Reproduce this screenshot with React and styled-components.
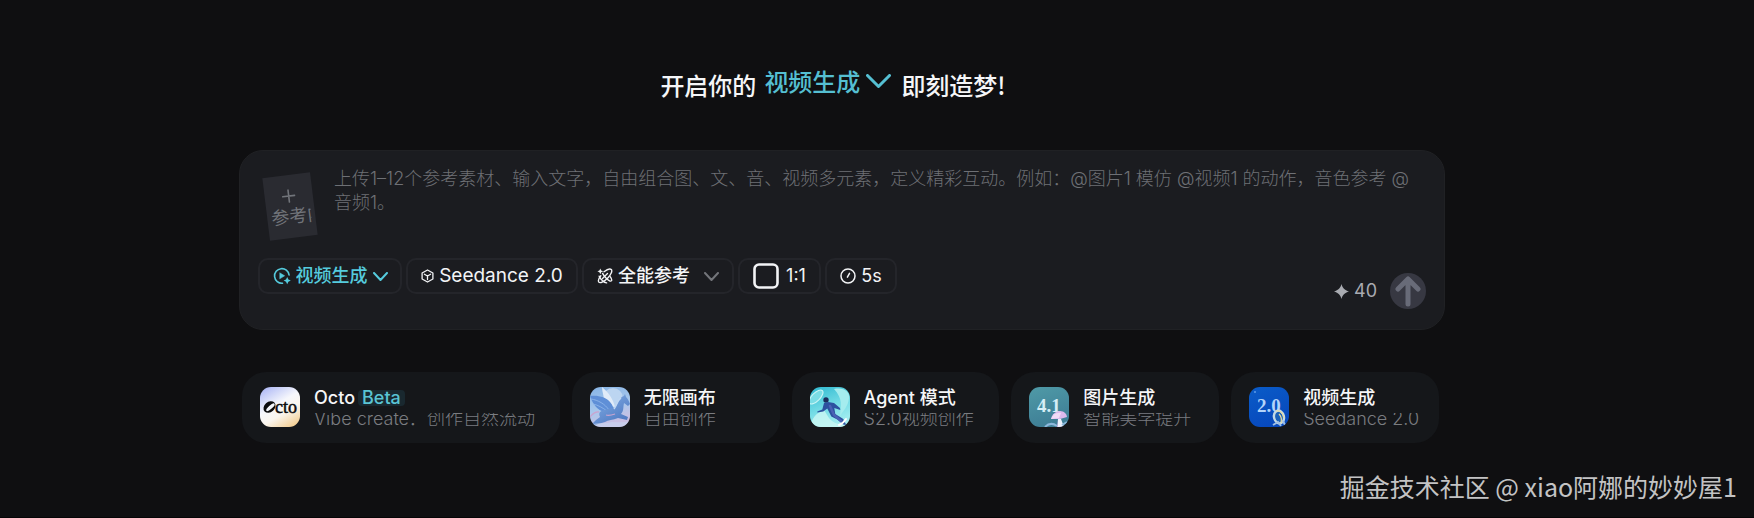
import React from "react";
import styled, { createGlobalStyle } from "styled-components";

const GlobalStyle = createGlobalStyle`
  *, *::before, *::after { box-sizing: border-box; }
  body {
    margin: 0;
    background: #0f0f11;
    color: #f5f6f8;
    font-family: Inter, "Noto Sans CJK SC", sans-serif;
  }
  button, select, textarea { font: inherit; color: inherit; margin: 0; padding: 0; border: 0; background: none; }
  h1, h2, p { margin: 0; font-weight: inherit; }
`;

const Page = styled.div`
  min-height: 100vh;
  display: flex;
  flex-direction: column;
`;

const Main = styled.main`
  padding: 65px 309px 0 239px;
`;

const Hero = styled.h1`
  display: flex;
  align-items: center;
  justify-content: center;
  gap: 8px;
  height: 40px;
  padding-right: 18px;
  font-size: 24px;
  line-height: 36px;
  font-weight: 500;
  font-family: "Noto Sans CJK SC", sans-serif;
  white-space: nowrap;
`;

const HeroPicker = styled.span`
  display: flex;
  align-items: center;
  gap: 6px;
  margin-right: 2px;
  padding-bottom: 8px;
  color: #55bfd2;
`;

const Select = styled.select`
  appearance: none;
  field-sizing: content;
  outline: none;
  cursor: pointer;
`;

const Composer = styled.form`
  display: flex;
  flex-direction: column;
  min-height: 180px;
  margin-top: 45px;
  padding: 16px 18px 18px;
  border-radius: 24px;
  border: 1px solid #202124;
  background: #1b1c20;
`;

const PromptRow = styled.div`
  display: flex;
  align-items: flex-start;
  gap: 12px;
  height: 91px;
`;

const UploadButton = styled.button`
  flex: none;
  display: flex;
  flex-direction: column;
  align-items: stretch;
  width: 48px;
  height: 63px;
  margin: 8px 8px 0;
  padding: 14px 4px 0;
  background: #2a2b31;
  color: #71747a;
  transform: rotate(-7deg);
  cursor: pointer;
  svg { align-self: center; }
`;

const UploadText = styled.span`
  overflow: hidden;
  margin-top: 2px;
  font-size: 18px;
  line-height: 24px;
  text-align: left;
  white-space: nowrap;
`;

const Prompt = styled.textarea`
  flex: 1;
  min-width: 0;
  height: 60px;
  resize: none;
  outline: none;
  font-size: 18px;
  line-height: 24px;
  font-weight: 300;
  &::placeholder { color: #6e7075; opacity: 1; }
`;

const Toolbar = styled.div`
  display: flex;
  align-items: flex-start;
  gap: 4px;
`;

const Chip = styled.div`
  display: flex;
  align-items: center;
  justify-content: center;
  gap: ${(p) => p.$gap || 5}px;
  height: 36px;
  min-width: ${(p) => p.$min}px;
  padding: 0 12px;
  border: 2px solid #24252a;
  border-radius: 10px;
  color: ${(p) => (p.$accent ? "#55cbdd" : "#f3f4f6")};
  font-size: ${(p) => p.$size || 18}px;
  line-height: 24px;
  font-weight: ${(p) => p.$weight || 500};
  white-space: nowrap;
  cursor: pointer;
  svg { flex: none; }
  select + svg { margin-left: ${(p) => p.$spread || 0}px; }
`;

const Submit = styled.div`
  display: flex;
  align-items: center;
  gap: 13px;
  margin: 15px 0 0 auto;
`;

const Credits = styled.span`
  display: flex;
  align-items: center;
  gap: 5px;
  color: #a9abb1;
  font-size: 18px;
  line-height: 24px;
`;

const SendButton = styled.button`
  display: grid;
  place-items: center;
  width: 36px;
  height: 36px;
  border-radius: 50%;
  background: #373842;
  color: #686b78;
  cursor: pointer;
`;

const Cards = styled.nav`
  display: grid;
  grid-template-columns: 318fr 208fr 208fr 208fr 208fr;
  gap: 12px;
  margin: 42px 6px 0 3px;
`;

const Card = styled.a`
  display: flex;
  align-items: flex-start;
  gap: 14px;
  min-width: 0;
  height: 71px;
  padding: 15px 16px 0 18px;
  border-radius: 24px;
  background: #15171a;
  color: inherit;
  text-decoration: none;
`;

const Thumb = styled.svg`
  flex: none;
  width: 40px;
  height: 40px;
  border-radius: 11px;
`;

const CardText = styled.span`
  display: flex;
  flex-direction: column;
  min-width: 0;
  white-space: nowrap;
`;

const CardTitle = styled.span`
  display: flex;
  align-items: center;
  gap: 3px;
  height: 21px;
  overflow: hidden;
  font-size: 18px;
  line-height: 24px;
  font-weight: 500;
`;

const Beta = styled.span`
  padding: 0 4px;
  border-radius: 4px;
  background: #19282f;
  color: #5ac4d4;
  line-height: 16px;
`;

const CardNote = styled.span`
  height: 13px;
  margin-top: 5px;
  overflow: hidden;
  color: #7a7c80;
  font-size: 18px;
  line-height: 12px;
  font-weight: 300;
`;

const Credit = styled.footer`
  margin: auto 0 0;
  padding: 0 17px 13px 0;
  border-bottom: 1px solid #050506;
  color: #c3c3c4;
  font-family: "Noto Sans CJK SC", sans-serif;
  font-size: 25px;
  line-height: 36px;
  text-align: right;
`;

const Chevron = ({ w, h, stroke = "currentColor", sw = 2 }) => (
  <svg width={w} height={h} viewBox={`0 0 ${w} ${h}`} fill="none" stroke={stroke} strokeWidth={sw} strokeLinecap="round" strokeLinejoin="round" aria-hidden="true">
    <path d={`M${sw / 2} ${sw / 2}L${w / 2} ${h - sw / 2}L${w - sw / 2} ${sw / 2}`} />
  </svg>
);

const VideoIcon = () => (
  <svg width="18" height="18" viewBox="0 0 18 18" fill="none" stroke="currentColor" strokeWidth="1.6" strokeLinecap="round" aria-hidden="true">
    <path d="M9.5 16.2A7.3 7.3 0 1 1 16.1 8" />
    <path d="M7 6l4.6 2.8L7 11.6z" fill="currentColor" strokeWidth="0.6" />
    <path d="M14.200 10l1.200 2.400 2.400 1.200-2.400 1.200-1.200 2.400-1.200-2.400-2.400-1.200 2.400-1.200z" fill="currentColor" stroke="none" />
  </svg>
);

const CubeIcon = () => (
  <svg width="13" height="14" viewBox="0 0 13 14" fill="none" stroke="currentColor" strokeWidth="1.3" strokeLinejoin="round" aria-hidden="true">
    <path d="M6.5 1l5.4 3v6l-5.4 3-5.4-3V4z" />
    <path d="M3.4 5.2l3.1 1.8 3.1-1.8M6.5 7v3.6" strokeLinecap="round" />
  </svg>
);

const ReferenceIcon = () => (
  <svg width="16" height="16" viewBox="0 0 16 16" fill="none" stroke="currentColor" strokeWidth="1.4" strokeLinecap="round" strokeLinejoin="round" aria-hidden="true">
    <path d="M7 3.800C10 1.400 13.200.600 14.300 1.600c1.300 1.300-.3 5.200-3.500 8.500S3.300 15.300 2 14.300c-1-1-.3-3.800 1.800-6.500" />
    <path d="M5.600 5.400c.8 1.600 2 3.200 3.400 4.500 2.300 2.300 4.700 3.500 5.400 2.900.6-.6.100-2.300-1.200-4.100" />
    <path d="M2.200 8.200c.5 1.400 1.700 3 3.200 4.400 1.500 1.300 3 2.100 4.200 2.300" />
    <path d="M5.500 10.500l5-5" />
    <path d="M3.300.4l.9 2 2 .9-2 .9-.9 2-.9-2-2-.9 2-.9z" fill="currentColor" stroke="none" />
  </svg>
);

const RatioIcon = () => (
  <svg width="26" height="26" viewBox="0 0 26 26" fill="none" stroke="currentColor" strokeWidth="2.6" aria-hidden="true">
    <rect x="1.500" y="1.500" width="23" height="23" rx="4.500" />
  </svg>
);

const TimeIcon = () => (
  <svg width="16" height="16" viewBox="0 0 16 16" fill="none" stroke="currentColor" strokeWidth="1.500" strokeLinecap="round" aria-hidden="true">
    <circle cx="8" cy="8" r="7" />
    <path d="M7.400 9.200L9.500 5.400" />
  </svg>
);

const OctoThumb = () => (
  <Thumb viewBox="0 0 40 40" aria-hidden="true">
    <defs>
      <linearGradient id="octo" x1="0.200" y1="0" x2="0.800" y2="1">
        <stop offset="0" stopColor="#b3bdf6" />
        <stop offset="0.420" stopColor="#f6f7fc" />
        <stop offset="0.650" stopColor="#fbf6ef" />
        <stop offset="1" stopColor="#f3cf94" />
      </linearGradient>
    </defs>
    <rect width="40" height="40" fill="url(#octo)" />
    <g transform="rotate(-42 9.500 20)">
      <ellipse cx="9.500" cy="20" rx="6.600" ry="5.200" fill="#0b0b0d" />
      <ellipse cx="10" cy="20.800" rx="5.400" ry="1.800" fill="#f4f5fa" />
    </g>
    <text x="15" y="25.500" fontFamily="Liberation Serif, serif" fontSize="18" stroke="#0b0b0d" strokeWidth="0.500" fill="#0b0b0d">cto</text>
  </Thumb>
);

const PegasusThumb = () => (
  <Thumb viewBox="0 0 40 40" aria-hidden="true">
    <defs>
      <linearGradient id="sky" x1="0" y1="0" x2="0.300" y2="1">
        <stop offset="0" stopColor="#86b4e6" />
        <stop offset="0.600" stopColor="#a9c8ec" />
        <stop offset="1" stopColor="#cbbfe2" />
      </linearGradient>
      <linearGradient id="horse" x1="0" y1="0" x2="0.700" y2="1">
        <stop offset="0" stopColor="#86b2e8" />
        <stop offset="1" stopColor="#4d77c0" />
      </linearGradient>
    </defs>
    <rect width="40" height="40" fill="url(#sky)" />
    <circle cx="23" cy="11" r="10" fill="#bcd5f1" />
    <path d="M12 0c7 6 11 12 13 20l-9-3C14 10 12 5 12 0z" fill="#e0ebf8" />
    <path d="M0 9c8-1 16 1 20 6 3 3 4 7 4 11l-10-1C8 23 3 18 0 9z" fill="#5f8fd7" />
    <path d="M1 12c7 1 14 5 18 11M3 17c5 1 10 4 14 7" stroke="#8fb5ea" strokeWidth="0.900" fill="none" />
    <path d="M10 25c5-4 12-2 16-6 2-4 4-9 8-10l1-2 1 3c2 2 3 4 4 7l-2 2-4-3c-1 4 0 8-3 11l7 3-1 3-9-2c-5 2-10 2-13 4l-7 2-5 3-1-3 4-4 4-3c-1-2-1-4 0-5z" fill="url(#horse)" />
    <path d="M31 11c-4 3-4 7-7 11" stroke="#c1d8f3" strokeWidth="1.500" fill="none" />
    <path d="M9 25c-5-1-7 3-9 5M16 28c3 1 6 0 9-1" stroke="#c9a4cf" strokeWidth="1.300" fill="none" />
    <path d="M0 38c8-3 16-1 22-3 6 0 12 1 18-1v6H0z" fill="#c6d7f1" opacity="0.600" />
  </Thumb>
);

const AgentThumb = () => (
  <Thumb viewBox="0 0 40 40" aria-hidden="true">
    <defs>
      <linearGradient id="wave" x1="0.200" y1="0" x2="0.600" y2="1">
        <stop offset="0" stopColor="#35bcd2" />
        <stop offset="0.500" stopColor="#72dbe5" />
        <stop offset="1" stopColor="#a8eff1" />
      </linearGradient>
    </defs>
    <rect width="40" height="40" fill="url(#wave)" />
    <ellipse cx="6" cy="10" rx="9" ry="4" transform="rotate(-45 6 10)" fill="#7bdde5" stroke="#c9f5f5" strokeWidth="1.200" />
    <path d="M24 2c10-2 16 3 15 9-1 9-6 13-9 18 1-11 3-17-6-27z" fill="#a5ecee" />
    <path d="M0 40c2-9 6-14 14-17l5 8c4 5 10 7 21 7v2z" fill="#ccf7f4" opacity="0.800" />
    <circle cx="16" cy="13" r="2.700" fill="#1c2c5c" />
    <path d="M14 16l4-1 6 1 6 5 .3 2-6-2 1 6 8 5 3 6-3-.5-6-5-6-3-4-8-4 3-6 1v-1l5-2z" fill="#2c529f" />
    <path d="M20 19l4 9 7 6" stroke="#4a61b5" strokeWidth="2.500" fill="none" strokeLinecap="round" />
    <path d="M29 38c3-1 5-3 7-6" stroke="#fff" strokeWidth="2" strokeLinecap="round" fill="none" />
  </Thumb>
);

const ImageThumb = () => (
  <Thumb viewBox="0 0 40 40" aria-hidden="true">
    <defs>
      <linearGradient id="teal" x1="0" y1="0" x2="0.300" y2="1">
        <stop offset="0" stopColor="#4f9aa7" />
        <stop offset="1" stopColor="#3f7f96" />
      </linearGradient>
    </defs>
    <rect width="40" height="40" fill="url(#teal)" />
    <text x="8" y="25" fontFamily="Liberation Serif, serif" fontSize="19" fontWeight="700" fill="#d5eef6">4.1</text>
    <path d="M22 32c1-5 5-8 9-8 4 0 7 3 7 6l-7 2 4 8h-7l1-8z" fill="#dcb9ec" />
    <path d="M22 32c2-5 6-7 10-6l-2 5z" fill="#f1dcf6" />
    <path d="M29 32h3l3 8h-6z" fill="#edf2fc" />
    <path d="M16 40c4-4 8-4 12-1M33 38l5-3" stroke="#8db8dc" strokeWidth="2" fill="none" />
  </Thumb>
);

const VideoThumb = () => (
  <Thumb viewBox="0 0 40 40" aria-hidden="true">
    <defs>
      <linearGradient id="blue" x1="0" y1="0" x2="0.400" y2="1">
        <stop offset="0" stopColor="#0a5cc8" />
        <stop offset="1" stopColor="#0749bd" />
      </linearGradient>
    </defs>
    <rect width="40" height="40" fill="url(#blue)" />
    <circle cx="6" cy="5" r="1" fill="#5d9be8" />
    <text x="8" y="25" fontFamily="Liberation Serif, serif" fontSize="19" fontWeight="700" fill="#b3d4fa">2.0</text>
    <ellipse cx="30" cy="30" rx="5" ry="6.500" transform="rotate(-15 30 30)" fill="#1b62b9" stroke="#c3d9e4" strokeWidth="2.400" />
    <path d="M27 24c4-1 7 2 8 7M30 27c2 2 3 5 2 9" stroke="#e4d9a1" strokeWidth="1.200" fill="none" />
    <path d="M24 38l5-3 3 4M34 34l2 4" stroke="#9fbfe4" strokeWidth="2" fill="none" />
  </Thumb>
);

const cards = [
  { title: "Octo", tag: "Beta", note: "Vibe create．创作自然流动", Art: OctoThumb },
  { title: "无限画布", note: "自由创作", Art: PegasusThumb },
  { title: "Agent 模式", note: "S2.0视频创作", Art: AgentThumb },
  { title: "图片生成", note: "智能美学提升", Art: ImageThumb },
  { title: "视频生成", note: "Seedance 2.0", Art: VideoThumb },
];

export default function App() {
  return (
    <Page>
      <GlobalStyle />
      <Main>
        <Hero>
          <span>开启你的</span>
          <HeroPicker>
            <Select aria-label="创作类型"><option>视频生成</option></Select>
            <Chevron w={25} h={14} sw={3} />
          </HeroPicker>
          <span>即刻造梦!</span>
        </Hero>
        <Composer onSubmit={(e) => e.preventDefault()}>
          <PromptRow>
            <UploadButton type="button">
              <svg width="14" height="14" viewBox="0 0 14 14" stroke="currentColor" strokeWidth="1.600" strokeLinecap="round" aria-hidden="true">
                <path d="M7 1v12M1 7h12" />
              </svg>
              <UploadText>参考内容</UploadText>
            </UploadButton>
            <Prompt
              aria-label="提示词"
              placeholder="上传1–12个参考素材、输入文字，自由组合图、文、音、视频多元素，定义精彩互动。例如：@图片1 模仿 @视频1 的动作，音色参考 @音频1。"
            />
          </PromptRow>
          <Toolbar>
            <Chip $accent $min={144}>
              <VideoIcon />
              <Select aria-label="生成模式"><option>视频生成</option></Select>
              <Chevron w={15} h={9} />
            </Chip>
            <Chip as="button" type="button" $min={172} $size={19} $weight={400}>
              <CubeIcon />
              Seedance 2.0
            </Chip>
            <Chip $min={152} $spread={9}>
              <ReferenceIcon />
              <Select aria-label="参考方式"><option>全能参考</option></Select>
              <Chevron w={15} h={9} stroke="#73757a" />
            </Chip>
            <Chip as="button" type="button" $min={83} $gap={7} $weight={400}>
              <RatioIcon />
              1:1
            </Chip>
            <Chip as="button" type="button" $min={72} $weight={400}>
              <TimeIcon />
              5s
            </Chip>
            <Submit>
              <Credits>
                <svg width="15" height="15" viewBox="0 0 15 15" fill="currentColor" aria-hidden="true">
                  <path d="M7.500 0C8.600 4 10.500 6.200 15 7.500 10.500 8.800 8.600 11 7.500 15 6.400 11 4.500 8.800 0 7.500 4.500 6.200 6.400 4 7.500 0z" />
                </svg>
                40
              </Credits>
              <SendButton type="submit" aria-label="发送">
                <svg width="26" height="32" viewBox="0 0 26 32" fill="none" stroke="currentColor" strokeWidth="5" strokeLinecap="round" strokeLinejoin="round" aria-hidden="true">
                  <path d="M13 29V4M3 14L13 4l10 10" />
                </svg>
              </SendButton>
            </Submit>
          </Toolbar>
        </Composer>
        <Cards aria-label="快捷入口">
          {cards.map(({ title, tag, note, Art }) => (
            <Card href="#" key={title}>
              <Art />
              <CardText>
                <CardTitle>{title}{tag && <Beta>{tag}</Beta>}</CardTitle>
                <CardNote>{note}</CardNote>
              </CardText>
            </Card>
          ))}
        </Cards>
      </Main>
      <Credit>掘金技术社区 @ xiao阿娜的妙妙屋1</Credit>
    </Page>
  );
}
